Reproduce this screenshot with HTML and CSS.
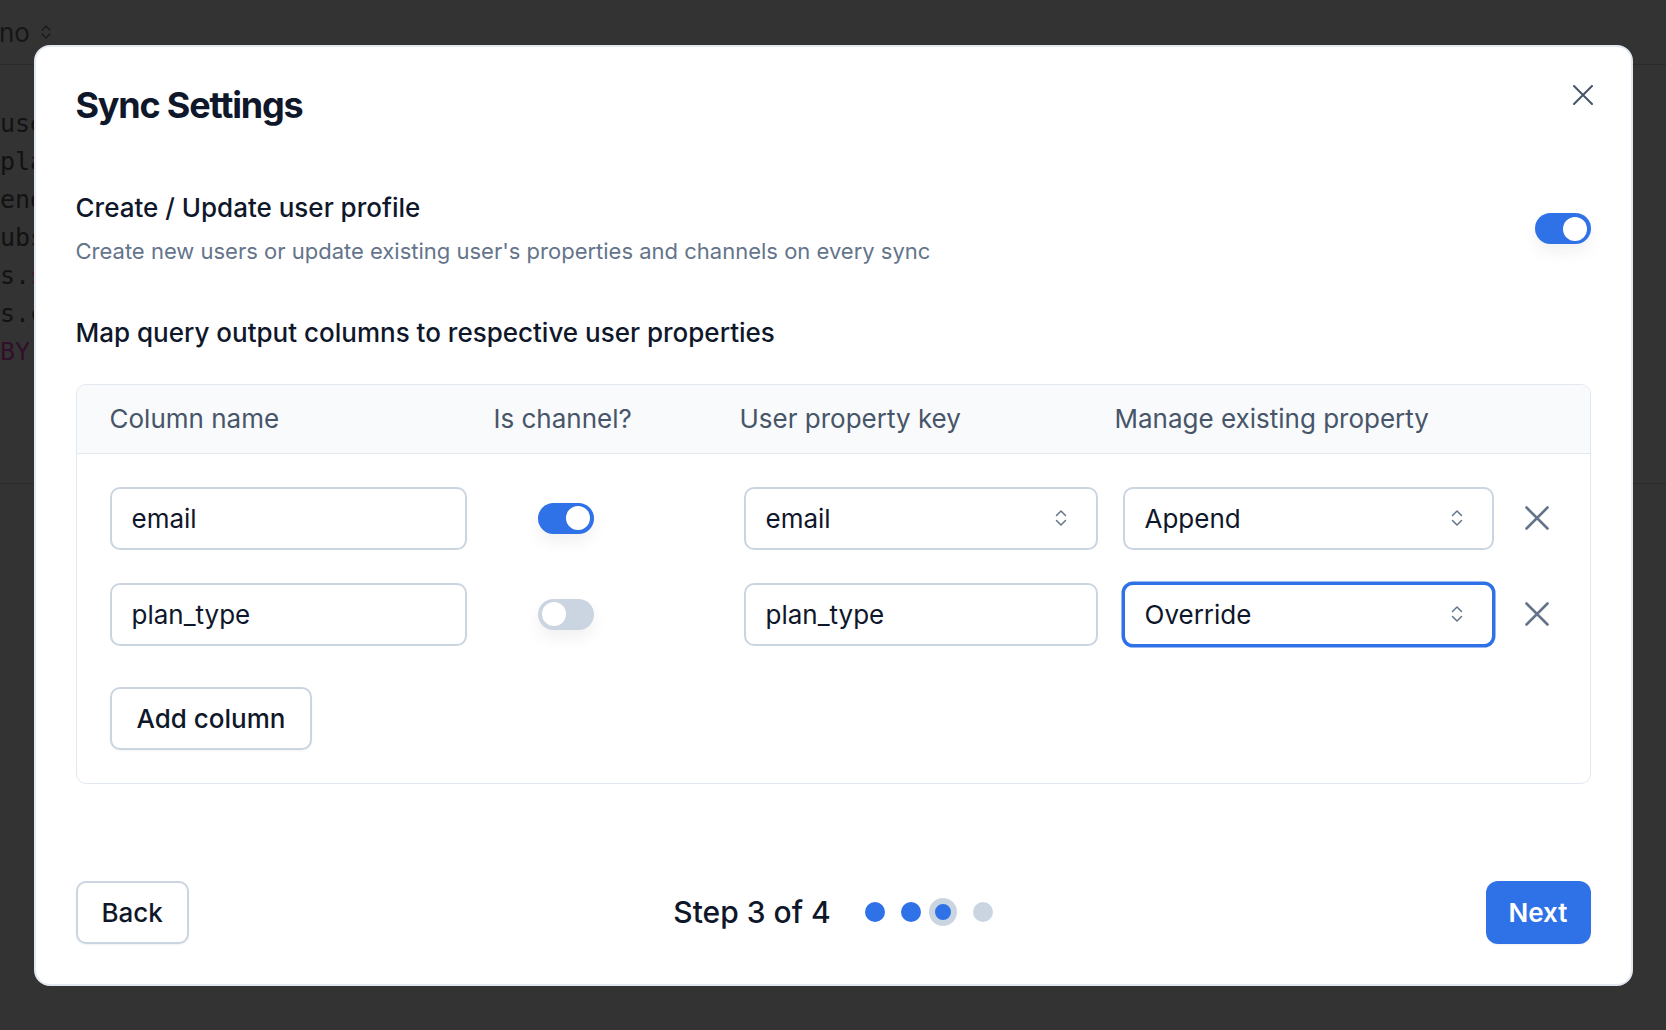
FILE: index.html
```html
<!DOCTYPE html>
<html lang="en">

<head>
    <meta charset="UTF-8">
    <meta name="viewport" content="width=device-width, initial-scale=1.0">
    <title>Sync Settings</title>
    <link rel="stylesheet" href="styles.css">
</head>

<body>
    <div class="app">
        <div class="topbar">
            <span class="db-name">no</span>
            <svg class="db-chevron" width="12" height="18" viewBox="0 0 12 18" fill="none">
                <path d="M2 7 6 3l4 4M2 11l4 4 4-4" stroke="#1c1c1c" stroke-width="1.5" stroke-linecap="round" stroke-linejoin="round" />
            </svg>
        </div>
        <div class="editor">
            <div class="code-line">users.email,</div>
            <div class="code-line">plan_type</div>
            <div class="code-line">end as plan</div>
            <div class="code-line">ubscriptions s</div>
            <div class="code-line">s.<span class="tok-str">status</span></div>
            <div class="code-line">s.created_at</div>
            <div class="code-line tok-kw">BY users.id</div>
        </div>
        <div class="results"></div>
    </div>

    <div class="backdrop">
        <div class="modal">
            <div class="modal-header">
                <h1>Sync Settings</h1>
                <button class="icon-btn close-btn" aria-label="Close">
                    <svg width="20" height="20" viewBox="0 0 20 20" fill="none">
                        <path d="M1 1 19 19M19 1 1 19" stroke="#475569" stroke-width="2" stroke-linecap="round" />
                    </svg>
                </button>
            </div>

            <div class="setting">
                <div class="setting-text">
                    <h2>Create / Update user profile</h2>
                    <p>Create new users or update existing user's properties and channels on every sync</p>
                </div>
                <span class="switch on"></span>
            </div>

            <h2 class="map-title">Map query output columns to respective user properties</h2>

            <div class="mapping">
                <div class="mapping-head">
                    <div>Column name</div>
                    <div>Is channel?</div>
                    <div>User property key</div>
                    <div>Manage existing property</div>
                </div>
                <div class="mapping-body">
                    <div class="mapping-row">
                        <div class="field">email</div>
                        <div class="cell-switch"><span class="switch on"></span></div>
                        <div class="field select">
                            <span>email</span>
                            <svg width="12" height="20" viewBox="0 0 12 20" fill="none">
                                <path d="M1.5 7.5 6 3l4.5 4.5M1.5 12.5 6 17l4.5-4.5" stroke="#64748b" stroke-width="1.5" stroke-linecap="round" stroke-linejoin="round" />
                            </svg>
                        </div>
                        <div class="field select">
                            <span>Append</span>
                            <svg width="12" height="20" viewBox="0 0 12 20" fill="none">
                                <path d="M1.5 7.5 6 3l4.5 4.5M1.5 12.5 6 17l4.5-4.5" stroke="#64748b" stroke-width="1.5" stroke-linecap="round" stroke-linejoin="round" />
                            </svg>
                        </div>
                        <button class="icon-btn remove-btn" aria-label="Remove">
                            <svg width="24" height="24" viewBox="0 0 24 24" fill="none">
                                <path d="M1.5 1.5 22.5 22.5M22.5 1.5 1.5 22.5" stroke="#64748b" stroke-width="2.6" stroke-linecap="round" />
                            </svg>
                        </button>
                    </div>
                    <div class="mapping-row">
                        <div class="field">plan_type</div>
                        <div class="cell-switch"><span class="switch"></span></div>
                        <div class="field">plan_type</div>
                        <div class="field select focused">
                            <span>Override</span>
                            <svg width="12" height="20" viewBox="0 0 12 20" fill="none">
                                <path d="M1.5 7.5 6 3l4.5 4.5M1.5 12.5 6 17l4.5-4.5" stroke="#64748b" stroke-width="1.5" stroke-linecap="round" stroke-linejoin="round" />
                            </svg>
                        </div>
                        <button class="icon-btn remove-btn" aria-label="Remove">
                            <svg width="24" height="24" viewBox="0 0 24 24" fill="none">
                                <path d="M1.5 1.5 22.5 22.5M22.5 1.5 1.5 22.5" stroke="#64748b" stroke-width="2.6" stroke-linecap="round" />
                            </svg>
                        </button>
                    </div>
                    <button class="btn add-btn">Add column</button>
                </div>
            </div>

            <div class="modal-footer">
                <button class="btn back-btn">Back</button>
                <div class="steps">
                    <span class="step-label">Step 3 of 4</span>
                    <div class="dots">
                        <span class="dot done"></span>
                        <span class="dot done"></span>
                        <span class="dot current"></span>
                        <span class="dot"></span>
                    </div>
                </div>
                <button class="btn primary next-btn">Next</button>
            </div>
        </div>
    </div>
</body>

</html>
```

FILE: styles.css
```css
* {
    box-sizing: border-box;
}

body {
    margin: 0;
    background: #333333;
    font-family: Inter, "Noto Sans", sans-serif;
    color: #0f172a;
    height: 100vh;
    overflow: hidden;
}

/* page behind the dialog */
.app {
    height: 100%;
    display: flex;
    flex-direction: column;
}

.topbar {
    height: 65px;
    border-bottom: 1px solid #2b2b2b;
    display: flex;
    align-items: center;
    gap: 10px;
    color: #161616;
    font-size: 26px;
}

.db-name {
    margin-left: -1px;
}

.editor {
    height: 419px;
    border-bottom: 1px solid #2b2b2b;
    padding-top: 40px;
    font-family: "DejaVu Sans Mono", monospace;
    font-size: 25px;
    line-height: 38px;
    color: #121212;
}

.code-line {
    white-space: pre;
}

.tok-str {
    color: #4a1324;
}

.tok-kw {
    color: #2f0f2a;
}

/* dialog */
.backdrop {
    position: fixed;
    inset: 0;
    display: flex;
    align-items: center;
    justify-content: center;
}

.modal {
    width: 1599px;
    background: #fff;
    border: 2px solid #e2e8f0;
    border-radius: 16px;
    padding: 40px;
    display: flex;
    flex-direction: column;
}

.modal-header {
    display: flex;
    justify-content: space-between;
    align-items: flex-start;
}

.modal-header h1 {
    margin: 0;
    font-size: 36px;
    line-height: 36px;
    font-weight: 700;
    letter-spacing: -1.2px;
}

.icon-btn {
    border: none;
    background: none;
    padding: 0;
    cursor: pointer;
    display: flex;
    align-items: center;
    justify-content: center;
}

.close-btn {
    margin-top: -2px;
    margin-right: -2px;
}

.setting {
    margin-top: 67px;
    display: flex;
    justify-content: space-between;
    align-items: center;
}

h2 {
    margin: 0;
    font-size: 26px;
    line-height: 36px;
    font-weight: 500;
}

.setting-text p {
    margin: 8px 0 0;
    font-size: 22px;
    line-height: 34px;
    color: #64748b;
}

.switch {
    width: 56px;
    height: 31px;
    border-radius: 16px;
    background: #cbd5e1;
    display: flex;
    align-items: center;
    padding: 0 4px;
    box-shadow: 0 8px 16px rgba(15, 23, 42, 0.06);
}

.switch::after {
    content: "";
    width: 24px;
    height: 24px;
    border-radius: 50%;
    background: #fff;
}

.switch.on {
    background: #2f71e7;
    justify-content: flex-end;
}

.map-title {
    margin-top: 47px;
}

.mapping {
    margin-top: 33px;
    border: 1px solid #e2e8f0;
    border-radius: 10px;
    overflow: hidden;
}

.mapping-head {
    height: 69px;
    background: #f8fafc;
    border-bottom: 1px solid #e2e8f0;
    display: grid;
    grid-template-columns: 384px 246px 375px 1fr;
    align-items: center;
    padding-left: 33px;
    font-size: 26px;
    color: #475569;
}

.mapping-body {
    padding: 33px;
    display: flex;
    flex-direction: column;
    align-items: flex-start;
    gap: 33px;
}

.mapping-row {
    display: grid;
    grid-template-columns: 357px 227px 354px 371px 36px;
    column-gap: 25px;
    align-items: center;
}

.field {
    height: 63px;
    border: 2px solid #cbd5e1;
    border-radius: 10px;
    padding: 0 20px;
    display: flex;
    align-items: center;
    justify-content: space-between;
    font-size: 26px;
    color: #0f172a;
    background: #fff;
}

.field.select {
    padding-right: 29px;
}

.field.focused {
    border-color: #2f71e7;
    box-shadow: 0 0 0 1.5px #2f71e7;
}

.cell-switch {
    padding-left: 46px;
}

.remove-btn {
    width: 36px;
    height: 42px;
}

.btn {
    height: 63px;
    padding: 0 25px;
    border: 2px solid #cbd5e1;
    border-radius: 10px;
    background: #fff;
    font-family: inherit;
    font-size: 26px;
    font-weight: 500;
    color: #0f172a;
    box-shadow: 0 1px 2px rgba(15, 23, 42, 0.05);
    cursor: pointer;
}

.add-btn {
    margin-top: 8px;
}

.modal-footer {
    margin-top: 97px;
    display: grid;
    grid-template-columns: 1fr auto 1fr;
    align-items: center;
}

.back-btn {
    justify-self: start;
    padding: 0 24px;
}

.next-btn {
    justify-self: end;
}

.btn.primary {
    height: 63px;
    padding: 0 23px;
    border: none;
    border-radius: 12px;
    background: #2f71e7;
    color: #fff;
    font-weight: 600;
}

.steps {
    display: flex;
    align-items: center;
    gap: 34px;
}

.step-label {
    font-size: 30px;
    font-weight: 500;
}

.dots {
    display: flex;
    align-items: center;
    gap: 16px;
}

.dot {
    width: 20px;
    height: 20px;
    border-radius: 50%;
    background: #cbd5e1;
}

.dot.done {
    background: #2f71e7;
}

.dot.current {
    width: 28px;
    height: 28px;
    margin-left: -8px;
    background: #2f71e7;
    border: 6px solid #cbd5e1;
}
```
